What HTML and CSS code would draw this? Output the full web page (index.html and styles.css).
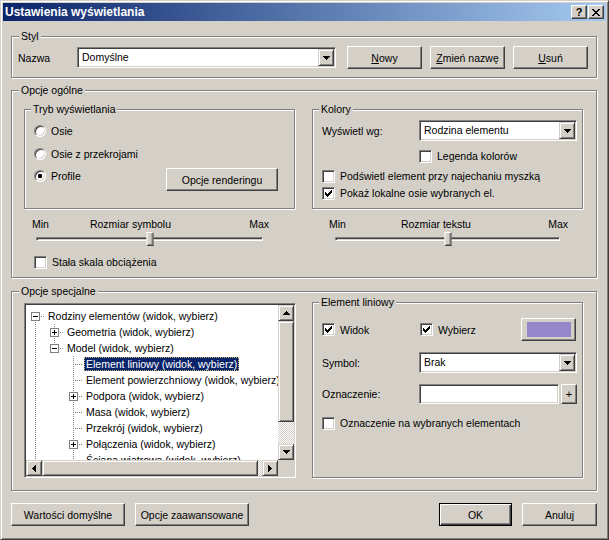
FILE: index.html
```html
<!DOCTYPE html>
<html lang="pl">
<head>
<meta charset="utf-8">
<title>Ustawienia wyświetlania</title>
<link rel="stylesheet" href="styles.css">
</head>
<body>
<div class="window">
  <div class="titlebar">
    <span class="title">Ustawienia wyświetlania</span>
    <span class="capbtn help">?</span>
    <span class="capbtn close"><svg width="8" height="7" viewBox="0 0 8 7"><path d="M0 0h2v1H0zM6 0h2v1H6zM1 1h2v1H1zM5 1h2v1H5zM2 2h4v1H2zM3 3h2v1H3zM2 4h4v1H2zM1 5h2v1H1zM5 5h2v1H5zM0 6h2v1H0zM6 6h2v1H6z"/></svg></span>
  </div>
  <div class="client">
    <fieldset class="group styl">
      <legend>Styl</legend>
      <div class="stylrow">
        <span class="lbl w59">Nazwa</span>
        <div class="combo w259"><span class="ctext">Domyślne</span><span class="dd"><svg width="7" height="4" viewBox="0 0 7 4"><path d="M0 0h7v1H0zM1 1h5v1H1zM2 2h3v1H2zM3 3h1v1H3z"/></svg></span></div>
        <button class="btn b75 ml11"><u>N</u>owy</button>
        <button class="btn b75 ml8"><u>Z</u>mień nazwę</button>
        <button class="btn b75 ml8"><u>U</u>suń</button>
      </div>
    </fieldset>

    <fieldset class="group ogolne">
      <legend>Opcje ogólne</legend>
      <div class="pair">
        <fieldset class="group sub tryb">
          <legend>Tryb wyświetlania</legend>
          <div class="opt"><span class="rb"></span><span>Osie</span></div>
          <div class="opt mt7"><span class="rb"></span><span>Osie z przekrojami</span></div>
          <div class="optrow">
            <div class="opt"><span class="rb on"><span class="dot"></span></span><span>Profile</span></div>
            <button class="btn brender">Opcje renderingu</button>
          </div>
        </fieldset>
        <fieldset class="group sub kolory">
          <legend>Kolory</legend>
          <div class="frow h21">
            <span class="lbl w97">Wyświetl wg:</span>
            <div class="combo w158"><span class="ctext">Rodzina elementu</span><span class="dd"><svg width="7" height="4" viewBox="0 0 7 4"><path d="M0 0h7v1H0zM1 1h5v1H1zM2 2h3v1H2zM3 3h1v1H3z"/></svg></span></div>
          </div>
          <div class="chk mt7 ml97"><span class="cb"></span><span>Legenda kolorów</span></div>
          <div class="chk mt4"><span class="cb"></span><span>Podświetl element przy najechaniu myszką</span></div>
          <div class="chk mt1"><span class="cb"><svg width="11" height="11" viewBox="0 0 11 11"><path d="M8 2h1v3H8zM7 3h1v3H7zM6 4h1v3H6zM5 5h1v3H5zM4 6h1v3H4zM3 5h1v3H3zM2 4h1v3H2z"/></svg></span><span>Pokaż lokalne osie wybranych el.</span></div>
        </fieldset>
      </div>
      <div class="pair mt9">
        <div class="slider left">
          <div class="slabels"><span class="smin">Min</span><span class="smid">Rozmiar symbolu</span><span class="smax">Max</span></div>
          <div class="srow"><div class="track"><span class="thumb" style="left:50%"></span></div></div>
        </div>
        <div class="slider right">
          <div class="slabels"><span class="smin">Min</span><span class="smid">Rozmiar tekstu</span><span class="smax">Max</span></div>
          <div class="srow"><div class="track"><span class="thumb" style="left:50%"></span></div></div>
        </div>
      </div>
      <div class="chk mt7 ml10"><span class="cb"></span><span>Stała skala obciążenia</span></div>
    </fieldset>

    <fieldset class="group specjalne">
      <legend>Opcje specjalne</legend>
      <div class="pair top">
        <div class="tree">
          <div class="tlist">
            <div class="trow"><span class="cell first"><svg class="box" width="9" height="9" viewBox="0 0 9 9"><rect x="0.5" y="0.5" width="8" height="8" fill="#fff" stroke="#808080"/><path d="M2 4h5v1H2z"/></svg></span><span class="tl">Rodziny elementów (widok, wybierz)</span></div>
            <div class="trow"><span class="cell v"></span><span class="cell tee"><svg class="box" width="9" height="9" viewBox="0 0 9 9"><rect x="0.5" y="0.5" width="8" height="8" fill="#fff" stroke="#808080"/><path d="M2 4h5v1H2zM4 2h1v5H4z"/></svg></span><span class="tl">Geometria (widok, wybierz)</span></div>
            <div class="trow"><span class="cell v"></span><span class="cell ell"><svg class="box" width="9" height="9" viewBox="0 0 9 9"><rect x="0.5" y="0.5" width="8" height="8" fill="#fff" stroke="#808080"/><path d="M2 4h5v1H2z"/></svg></span><span class="tl">Model (widok, wybierz)</span></div>
            <div class="trow"><span class="cell v"></span><span class="cell"></span><span class="cell tee"></span><span class="tl sel">Element liniowy (widok, wybierz)</span></div>
            <div class="trow"><span class="cell v"></span><span class="cell"></span><span class="cell tee"></span><span class="tl">Element powierzchniowy (widok, wybierz)</span></div>
            <div class="trow"><span class="cell v"></span><span class="cell"></span><span class="cell tee"><svg class="box" width="9" height="9" viewBox="0 0 9 9"><rect x="0.5" y="0.5" width="8" height="8" fill="#fff" stroke="#808080"/><path d="M2 4h5v1H2zM4 2h1v5H4z"/></svg></span><span class="tl">Podpora (widok, wybierz)</span></div>
            <div class="trow"><span class="cell v"></span><span class="cell"></span><span class="cell tee"></span><span class="tl">Masa (widok, wybierz)</span></div>
            <div class="trow"><span class="cell v"></span><span class="cell"></span><span class="cell tee"></span><span class="tl">Przekrój (widok, wybierz)</span></div>
            <div class="trow"><span class="cell v"></span><span class="cell"></span><span class="cell tee"><svg class="box" width="9" height="9" viewBox="0 0 9 9"><rect x="0.5" y="0.5" width="8" height="8" fill="#fff" stroke="#808080"/><path d="M2 4h5v1H2zM4 2h1v5H4z"/></svg></span><span class="tl">Połączenia (widok, wybierz)</span></div>
            <div class="trow"><span class="cell v"></span><span class="cell"></span><span class="cell tee"></span><span class="tl">Ściana wiatrowa (widok, wybierz)</span></div>
          </div>
          <div class="vscroll">
            <span class="sbtn"><svg width="7" height="4" viewBox="0 0 7 4"><path d="M3 0h1v1H3zM2 1h3v1H2zM1 2h5v1H1zM0 3h7v1H0z"/></svg></span>
            <span class="sthumb vthumb"></span>
            <span class="strack"></span>
            <span class="sbtn"><svg width="7" height="4" viewBox="0 0 7 4"><path d="M0 0h7v1H0zM1 1h5v1H1zM2 2h3v1H2zM3 3h1v1H3z"/></svg></span>
          </div>
          <div class="hscroll">
            <span class="sbtn"><svg width="4" height="7" viewBox="0 0 4 7"><path d="M0 3h1v1H0zM1 2h1v3H1zM2 1h1v5H2zM3 0h1v7H3z"/></svg></span>
            <span class="sthumb hthumb"></span>
            <span class="strack"></span>
            <span class="sbtn"><svg width="4" height="7" viewBox="0 0 4 7"><path d="M0 0h1v7H0zM1 1h1v5H1zM2 2h1v3H2zM3 3h1v1H3z"/></svg></span>
          </div>
          <div class="corner"></div>
        </div>
        <fieldset class="group sub element">
          <legend>Element liniowy</legend>
          <div class="frow h23">
            <div class="chk w98"><span class="cb"><svg width="11" height="11" viewBox="0 0 11 11"><path d="M8 2h1v3H8zM7 3h1v3H7zM6 4h1v3H6zM5 5h1v3H5zM4 6h1v3H4zM3 5h1v3H3zM2 4h1v3H2z"/></svg></span><span>Widok</span></div>
            <div class="chk w101"><span class="cb"><svg width="11" height="11" viewBox="0 0 11 11"><path d="M8 2h1v3H8zM7 3h1v3H7zM6 4h1v3H6zM5 5h1v3H5zM4 6h1v3H4zM3 5h1v3H3zM2 4h1v3H2z"/></svg></span><span>Wybierz</span></div>
            <button class="btn bcolor"><span class="swatch"></span></button>
          </div>
          <div class="frow h21 mt11">
            <span class="lbl w97">Symbol:</span>
            <div class="combo w158"><span class="ctext">Brak</span><span class="dd"><svg width="7" height="4" viewBox="0 0 7 4"><path d="M0 0h7v1H0zM1 1h5v1H1zM2 2h3v1H2zM3 3h1v1H3z"/></svg></span></div>
          </div>
          <div class="frow h20 mt11">
            <span class="lbl w97">Oznaczenie:</span>
            <div class="edit"></div>
            <button class="btn bplus">+</button>
          </div>
          <div class="chk mt11"><span class="cb"></span><span>Oznaczenie na wybranych elementach</span></div>
        </fieldset>
      </div>
    </fieldset>

    <div class="footer">
      <button class="btn bwide">Wartości domyślne</button>
      <button class="btn bwide ml10">Opcje zaawansowane</button>
      <button class="btn bok def">OK</button>
      <button class="btn bcancel ml10">Anuluj</button>
    </div>
  </div>
</div>
</body>
</html>
```

FILE: styles.css
```css
* { box-sizing: border-box; }
html, body { margin: 0; padding: 0; background: #D4D0C8; }
body {
  font-family: "Liberation Sans", Arial, sans-serif;
  font-size: 10.5px;
  color: #000;
}

.window {
  width: 609px;
  height: 540px;
  border: 1px solid;
  border-color: #D4D0C8 #404040 #404040 #D4D0C8;
  box-shadow: inset 1px 1px #fff, inset -1px -1px #808080;
  padding: 2px;
  background: #D4D0C8;
  display: flex;
  flex-direction: column;
}

/* title bar */
.titlebar {
  height: 18px;
  flex: none;
  display: flex;
  align-items: center;
  padding-left: 2px;
  background: linear-gradient(to right, #0A246A, #A6CAF0);
}
.title {
  flex: 1;
  color: #fff;
  font-weight: bold;
  font-size: 12px;
  white-space: nowrap;
}
.capbtn {
  width: 16px;
  height: 14px;
  display: flex;
  align-items: center;
  justify-content: center;
  background: #D4D0C8;
  border: 1px solid;
  border-color: #fff #404040 #404040 #fff;
  box-shadow: inset -1px -1px #808080;
  font-weight: bold;
  font-size: 11px;
  line-height: 12px;
}
.help { margin-right: 1px; }
.close { margin-right: 2px; }

.client {
  flex: 1;
  display: flex;
  flex-direction: column;
  padding: 9px 9px 0 8px;
}

/* group boxes */
.group {
  margin: 0;
  border: 1px solid #808080;
  box-shadow: inset 1px 1px #fff, 1px 1px #fff;
  min-inline-size: 0;
}
.group > legend {
  padding: 0 2px;
  line-height: 13px;
  background: #D4D0C8;
  white-space: nowrap;
}
.styl { padding: 3px 8px 8px 6px; }
.styl > legend { margin-left: 1px; }
.ogolne { margin-top: 6px; padding: 6px 13px 7px 12px; }
.ogolne > legend, .specjalne > legend { margin-left: -5px; }
.specjalne { margin-top: 7px; padding: 0 13px 12px 12px; }
.sub { width: 271px; flex: none; }
.sub > legend { margin-left: -3px; }
.tryb { height: 106px; padding: 7px 16px 0 9px; }
.kolory { height: 106px; padding: 4px 0 0 9px; }
.element { height: 182px; margin-top: -2px; padding: 9px 0 0 9px; }

/* rows */
.stylrow { display: flex; align-items: center; height: 23px; }
.pair { display: flex; gap: 17px; }
.pair.top { align-items: flex-start; gap: 16px; }
.frow { display: flex; align-items: center; }
.h20 { height: 20px; }
.h21 { height: 21px; }
.h23 { height: 23px; }
.lbl { flex: none; white-space: nowrap; }
.w59 { width: 59px; }
.w97 { width: 97px; }
.w98 { width: 98px; flex: none; }
.w101 { width: 101px; flex: none; }
.mt1 { margin-top: 1px; }
.mt4 { margin-top: 4px; }
.mt7 { margin-top: 7px; }
.mt9 { margin-top: 9px; }
.mt11 { margin-top: 11px; }
.ml8 { margin-left: 8px; }
.ml10 { margin-left: 10px; }
.ml11 { margin-left: 11px; }
.ml97 { margin-left: 97px; }

/* buttons */
.btn {
  height: 23px;
  padding: 0;
  margin-top: 0;
  margin-bottom: 0;
  font: inherit;
  color: #000;
  background: #D4D0C8;
  border: 1px solid;
  border-color: #fff #404040 #404040 #fff;
  box-shadow: inset -1px -1px #808080;
  display: flex;
  align-items: center;
  justify-content: center;
  white-space: nowrap;
  flex: none;
}
.btn.def {
  border: 1px solid #000;
  box-shadow: inset 1px 1px #fff, inset -1px -1px #404040, inset -2px -2px #808080;
}
.b75 { width: 75px; }
.brender { width: 112px; }
.bwide { width: 114px; }
.bok { width: 73px; margin-left: auto; }
.bcancel { width: 75px; }
.bcolor { width: 55px; }
.swatch { width: 44px; height: 15px; background: #9585C9; }
.bplus { width: 16px; height: 20px; margin-left: 2px; font-size: 11px; }

/* combo / edit */
.combo, .edit {
  display: flex;
  background: #fff;
  border: 1px solid;
  border-color: #808080 #fff #fff #808080;
  box-shadow: inset 1px 1px #404040, inset -1px -1px #D4D0C8;
  padding: 1px;
  flex: none;
}
.combo { height: 21px; }
.w259 { width: 259px; }
.w158 { width: 158px; }
.ctext {
  flex: 1;
  line-height: 17px;
  padding-left: 3px;
  white-space: nowrap;
  overflow: hidden;
}
.dd {
  width: 16px;
  height: 17px;
  flex: none;
  display: flex;
  align-items: center;
  justify-content: center;
  background: #D4D0C8;
  border: 1px solid;
  border-color: #D4D0C8 #404040 #404040 #D4D0C8;
  box-shadow: inset 1px 1px #fff, inset -1px -1px #808080;
}
.edit { width: 140px; height: 20px; }

/* radio and checkbox */
.opt, .chk {
  display: flex;
  align-items: center;
  height: 16px;
  gap: 5px;
  white-space: nowrap;
}
.optrow {
  display: flex;
  justify-content: space-between;
  align-items: flex-start;
  margin-top: 6px;
}
.rb {
  width: 12px;
  height: 12px;
  flex: none;
  border-radius: 50%;
  background: #fff;
  border: 1px solid;
  border-color: #808080 #fff #fff #808080;
  box-shadow: inset 1px 1px #404040, inset -1px -1px #D4D0C8;
  display: flex;
  align-items: center;
  justify-content: center;
}
.dot { width: 4px; height: 4px; border-radius: 1px; background: #000; }
.cb {
  width: 13px;
  height: 13px;
  flex: none;
  background: #fff;
  border: 1px solid;
  border-color: #808080 #fff #fff #808080;
  box-shadow: inset 1px 1px #404040, inset -1px -1px #D4D0C8;
  display: block;
}
.cb svg { display: block; }

/* sliders */
.slider { width: 271px; flex: none; }
.slabels { display: flex; height: 13px; line-height: 13px; white-space: nowrap; }
.left .smin { margin-left: 8px; }
.left .smid { margin-left: 41px; }
.left .smax { margin-left: auto; margin-right: 26px; }
.right .smin { margin-left: 17px; }
.right .smid { margin-left: 55px; }
.right .smax { margin-left: auto; margin-right: 15px; }
.srow { height: 16px; display: flex; align-items: center; }
.track {
  position: relative;
  height: 4px;
  border: 1px solid;
  border-color: #808080 #fff #fff #808080;
  box-shadow: inset 1px 1px #404040;
  background: #D4D0C8;
}
.left .track { margin-left: 12px; width: 227px; }
.right .track { margin-left: 23px; width: 225px; }
.thumb {
  position: absolute;
  top: -6px;
  width: 7px;
  height: 14px;
  transform: translateX(-50%);
  background: #D4D0C8;
  border: 1px solid;
  border-color: #fff #404040 #404040 #fff;
  box-shadow: inset -1px -1px #808080;
}

/* tree view */
.tree {
  width: 272px;
  height: 175px;
  margin-top: 5px;
  flex: none;
  border: 1px solid;
  border-color: #808080 #fff #fff #808080;
  box-shadow: inset 1px 1px #404040, inset -1px -1px #D4D0C8;
  padding: 1px;
  background: #fff;
  display: grid;
  grid-template-columns: 252px 16px;
  grid-template-rows: 155px 16px;
}
.tlist {
  overflow: hidden;
  background: #fff;
  padding-top: 3px;
}
.trow {
  display: flex;
  height: 16px;
  white-space: nowrap;
}
.cell {
  width: 19px;
  flex: none;
  display: flex;
  justify-content: center;
  align-items: flex-start;
  background-repeat: no-repeat;
}
.box { margin-top: 4px; display: block; }
.cell.v {
  background-image: repeating-linear-gradient(to bottom, #808080 0 1px, transparent 1px 2px);
  background-position: 9px 0;
  background-size: 1px 16px;
}
.cell.tee {
  background-image:
    repeating-linear-gradient(to bottom, #808080 0 1px, transparent 1px 2px),
    repeating-linear-gradient(to right, #808080 0 1px, transparent 1px 2px);
  background-position: 9px 0, 11px 8px;
  background-size: 1px 16px, 8px 1px;
}
.cell.ell {
  background-image:
    repeating-linear-gradient(to bottom, #808080 0 1px, transparent 1px 2px),
    repeating-linear-gradient(to right, #808080 0 1px, transparent 1px 2px);
  background-position: 9px 0, 11px 8px;
  background-size: 1px 9px, 8px 1px;
}
.cell.first {
  background-image:
    repeating-linear-gradient(to bottom, #808080 0 1px, transparent 1px 2px),
    repeating-linear-gradient(to right, #808080 0 1px, transparent 1px 2px);
  background-position: 9px 8px, 11px 8px;
  background-size: 1px 8px, 8px 1px;
}
.tl {
  margin-left: 1px;
  padding: 0 2px;
  line-height: 14px;
  height: 14px;
  align-self: center;
}
.tl.sel {
  background: #0A246A;
  color: #fff;
  outline: 1px dotted #C8B46E;
  outline-offset: -1px;
}

/* scrollbars */
.vscroll { display: flex; flex-direction: column; }
.hscroll { display: flex; }
.sbtn, .sthumb {
  flex: none;
  background: #D4D0C8;
  border: 1px solid;
  border-color: #D4D0C8 #404040 #404040 #D4D0C8;
  box-shadow: inset 1px 1px #fff, inset -1px -1px #808080;
}
.sbtn {
  width: 16px;
  height: 16px;
  display: flex;
  align-items: center;
  justify-content: center;
}
.vthumb { height: 101px; width: 16px; }
.hthumb { width: 216px; height: 16px; }
.strack {
  flex: 1;
  background: repeating-conic-gradient(#fff 0 25%, #D4D0C8 0 50%) 0 0 / 2px 2px;
}
.corner { background: #D4D0C8; }

/* footer */
.footer {
  display: flex;
  margin-top: 12px;
}
```
